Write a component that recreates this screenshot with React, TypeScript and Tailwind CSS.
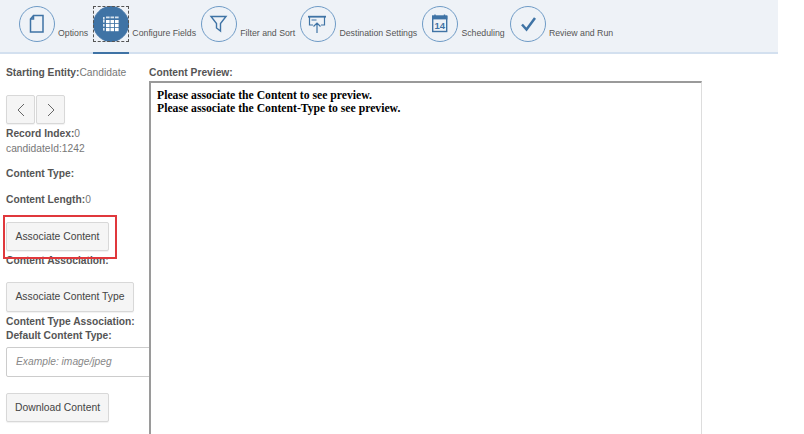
import React from 'react';

const BLUE = '#3f73a5';

const steps = [
  {
    label: 'Options',
    icon: <path d="M14.5 9.5h9.5v16.5H11.5V13zM14.5 9.5V13h-3" fill="none" stroke={BLUE} strokeWidth="1.5" />,
  },
  {
    label: 'Configure Fields',
    active: true,
    icon: (
      <g fill="#fff">
        {[14, 18, 22].map((y) =>
          [13, 17.5, 22].map((x) => <rect key={`${x}-${y}`} x={x} y={y} width="3.6" height="3.2" />)
        )}
        {[13, 17.5, 22].map((x) => (
          <rect key={x} x={x} y="10.5" width="3.6" height="1.8" opacity="0.8" />
        ))}
        {[11, 14, 18, 22].map((y) => (
          <rect key={y} x="10" y={y} width="1.6" height="2.6" opacity="0.8" />
        ))}
      </g>
    ),
  },
  {
    label: 'Filter and Sort',
    icon: <path d="M10 10.5h15l-5.5 7v7.5l-4-3v-4.5z" fill="none" stroke={BLUE} strokeWidth="1.4" />,
  },
  {
    label: 'Destination Settings',
    icon: (
      <g fill="none" stroke={BLUE} strokeWidth="1.2">
        <path d="M8 10.7h18" strokeWidth="1.8" />
        <path d="M9.5 11v8h3.5M24.5 11v8h-3.5M11.5 14h5M17 27V17M13.5 20.5 17 17l3.5 3.5" />
      </g>
    ),
  },
  {
    label: 'Scheduling',
    icon: (
      <g>
        <rect x="10.7" y="10" width="14" height="15.5" fill="none" stroke={BLUE} strokeWidth="1.4" />
        <path d="M10 10h15.4v3.4H10z" fill={BLUE} />
        <path d="M13 8.5v2M22.5 8.5v2" stroke={BLUE} strokeWidth="1.4" />
        <text x="17.7" y="23.4" textAnchor="middle" fontSize="9.5" fontWeight="700" fill={BLUE} fontFamily="Liberation Sans, sans-serif">
          14
        </text>
      </g>
    ),
  },
  {
    label: 'Review and Run',
    icon: <path d="M12 18.5 16.5 23.5 25 12" fill="none" stroke={BLUE} strokeWidth="2.5" />,
  },
];

const Btn = ({ children, className = '' }: { children: React.ReactNode; className?: string }) => (
  <button className={`bg-[#f5f5f5] border border-[#d8d8d8] rounded-[2px] text-[10.35px] text-[#444] shadow-[0_1px_1px_rgba(0,0,0,0.06)] ${className}`}>
    {children}
  </button>
);

const Bold = ({ children }: { children: React.ReactNode }) => <span className="font-bold text-[#555]">{children}</span>;

export default function App() {
  return (
    <div className="w-[804px] h-[434px] overflow-hidden bg-white text-[10.25px] text-[#777] font-['Liberation_Sans',Arial,sans-serif]">
      <div className="w-[778px] h-[54px] bg-[#eef2f7] border-b-2 border-[#d3e0ef] flex items-start pl-[19px] pt-[6px]">
        {steps.map((s) => (
          <div key={s.label} className="relative flex items-start mr-[5.2px]">
            <div className={`w-[36px] h-[36px] rounded-full flex items-center justify-center border ${s.active ? 'bg-[#3f73a5] border-[#3f73a5]' : 'border-[#6f9bc6]'}`}>
              <svg width="36" height="36" viewBox="0 0 36 36" className="shrink-0">{s.icon}</svg>
            </div>
            <span className="ml-[3px] mt-[21px] text-[8.75px] leading-[12px] text-[#555] whitespace-nowrap">{s.label}</span>
            {s.active && <div className="absolute left-0 top-0 w-[36px] h-[36px] border border-dashed border-[#555]" />}
            {s.active && <div className="absolute left-0 top-[46px] w-[36px] h-[2px] bg-[#3f73a5]" />}
          </div>
        ))}
      </div>

      <div className="flex pl-[6px] pt-[12px]">
        <div className="w-[143px] shrink-0">
          <div className="leading-[13px]"><Bold>Starting Entity:</Bold>Candidate</div>
          <div className="flex gap-[1px] mt-[16px]">
            <Btn className="w-[29px] h-[29px] flex items-center justify-center">
              <svg width="12" height="14" viewBox="0 0 12 14"><path d="M9 1 3 7l6 6" fill="none" stroke="#666" /></svg>
            </Btn>
            <Btn className="w-[29px] h-[29px] flex items-center justify-center">
              <svg width="12" height="14" viewBox="0 0 12 14"><path d="m3 1 6 6-6 6" fill="none" stroke="#666" /></svg>
            </Btn>
          </div>
          <div className="leading-[14px] mt-[3px]"><Bold>Record Index:</Bold>0</div>
          <div className="leading-[14px] mt-[1px]">candidateId:1242</div>
          <div className="leading-[14px] mt-[11px]"><Bold>Content Type:</Bold></div>
          <div className="leading-[14px] mt-[12px]"><Bold>Content Length:</Bold>0</div>
          <div className="relative mt-[15px]">
            <Btn className="w-[103px] h-[29px] block">Associate Content</Btn>
            <div className="absolute -left-[3px] -top-[7px] w-[114px] h-[44px] border-2 border-[#e0383c]" />
          </div>
          <div className="leading-[14px] mt-[3px]"><Bold>Content Association:</Bold></div>
          <Btn className="w-[128px] h-[30px] mt-[14px] block">Associate Content Type</Btn>
          <div className="leading-[14px] mt-[3px] whitespace-nowrap"><Bold>Content Type Association:</Bold></div>
          <div className="leading-[14px]"><Bold>Default Content Type:</Bold></div>
          <div className="mt-[4px] h-[30px] w-[144px] border border-[#ccc] flex items-center pl-[9px] italic text-[#888] rounded-l-[2px]">Example: image/jpeg</div>
          <Btn className="w-[103px] h-[29px] mt-[16px] block">Download Content</Btn>
        </div>

        <div>
          <div className="leading-[13px]"><Bold>Content Preview:</Bold></div>
          <div className="mt-[2px] w-[553px] h-[400px] border-t-2 border-l-2 border-r border-[#9a9a9a] border-r-[#ddd] pl-[6px] pt-[6px] font-['Liberation_Serif',serif] font-bold text-[11.7px] leading-[13px] text-black">
            <div>Please associate the Content to see preview.</div>
            <div>Please associate the Content-Type to see preview.</div>
          </div>
        </div>
      </div>
    </div>
  );
}
